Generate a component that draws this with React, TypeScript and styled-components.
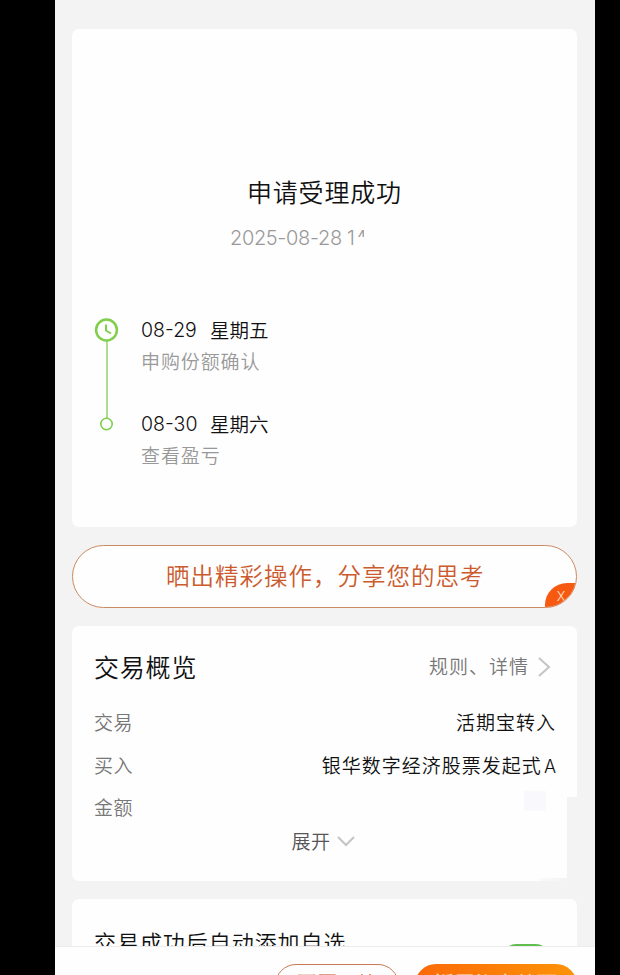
import React from "react";
import styled, { createGlobalStyle } from "styled-components";

const Global = createGlobalStyle`
  * { box-sizing: border-box; }
  html, body { margin: 0; padding: 0; background: #000; overflow: hidden; }
  body { font-family: "Noto Sans CJK SC", sans-serif; font-weight: 350; }
`;

const Screen = styled.main`
  width: 540px;
  height: 975px;
  margin-left: 55px;
  background: #f3f3f3;
  display: flex;
  flex-direction: column;
  overflow: hidden;
`;

const Content = styled.div`
  flex: 1;
  min-height: 0;
  overflow: hidden;
  padding: 29px 18px 0 17px;
`;

const Card = styled.section<{ $height: number }>`
  position: relative;
  height: ${(p) => p.$height}px;
  background: #fefefe;
  border-radius: 7px;
  margin-bottom: 18px;
  padding: 0 22px;
`;

const Text = styled.span<{ $size: number; $color?: string; $gap?: number; $weight?: number }>`
  display: block;
  white-space: nowrap;
  font-size: ${(p) => p.$size}px;
  color: ${(p) => p.$color ?? "#111"};
  letter-spacing: ${(p) => p.$gap ?? 0}px;
  font-weight: ${(p) => p.$weight ?? 350};
  line-height: 30px;
`;

const Digits = styled(Text)`
  font-family: Inter, "Noto Sans CJK SC", sans-serif;
  font-weight: 300;
`;

const Latin = styled.span`
  margin-left: 2px;
  letter-spacing: 0;
  font-family: Inter, sans-serif;
  font-size: 18px;
  font-weight: 300;
`;

const ResultHead = styled.header`
  padding: 147px 0 0 153px;
  height: 286px;
`;

const Stamp = styled.div`
  display: flex;
  margin: 17px 0 0 -17px;
`;

const CutDigit = styled.div`
  height: 14px;
  width: 9px;
  overflow: hidden;
`;

const Timeline = styled.div`
  display: grid;
  grid-template-columns: 47px 1fr;
`;

const Rail = styled.svg`
  display: block;
  width: 26px;
  height: 120px;
`;

const Steps = styled.div`
  display: grid;
  grid-auto-rows: 94px;
`;

const Step = styled.div`
  display: flex;
  flex-direction: column;
  gap: 1px;
`;

const StepDate = styled.div`
  display: grid;
  grid-template-columns: 69px auto;
`;

const Share = styled.div`
  height: 63px;
  margin-bottom: 18px;
  border: 1px solid #cb8a62;
  border-radius: 32px;
  background: #fefefe;
  overflow: hidden;
  position: relative;
  padding: 14px 0 0 93px;
`;

const Close = styled.button`
  position: absolute;
  right: -1px;
  bottom: -1px;
  width: 32px;
  height: 25px;
  border: 0;
  padding: 0;
  background: #f6590f;
  border-radius: 22px 0 0 0;
  color: #ffe5d3;
  font: 300 13px/24px Inter, sans-serif;
`;

const OverviewHead = styled.header`
  display: flex;
  justify-content: space-between;
  padding: 25px 4px 0 0;
  height: 81px;
`;

const Details = styled.div`
  display: flex;
  gap: 9px;
`;

const Chevron = styled.svg`
  fill: none;
  stroke: #c4c4c4;
  stroke-width: 2;
`;

const Row = styled.div`
  display: flex;
  justify-content: space-between;
  height: 42.5px;
  margin-right: -1px;
`;

const HiddenAmount = styled.span`
  width: 22px;
  height: 20px;
  margin: -1px 10px 0 0;
  background: #f9f9fd;
`;

const Expand = styled.div`
  display: flex;
  justify-content: center;
  gap: 6px;
  margin: -9px 0 0 -3px;
`;

const EdgeMask = styled.span`
  position: absolute;
  right: 0;
  bottom: 0;
  width: 10px;
  height: 84px;
  background: #f3f3f4;

  &::before {
    content: "";
    position: absolute;
    right: 10px;
    bottom: 0;
    width: 28px;
    height: 3px;
    background: linear-gradient(90deg, #fafafa, #f3f3f4);
  }
`;

const FavoriteRow = styled.div`
  display: flex;
  justify-content: space-between;
  padding-top: 27px;
`;

const Toggle = styled.span`
  width: 46px;
  height: 26px;
  margin: 18px 6px 0 0;
  border-radius: 13px;
  background: #62bd50;
`;

const Footer = styled.footer`
  height: 29px;
  background: #fefefe;
  border-top: 1px solid #ececec;
  display: flex;
  justify-content: flex-end;
  gap: 16px;
  padding: 17px 18px 0 0;
  overflow: hidden;
`;

const Action = styled.button<{ $primary?: boolean }>`
  flex: none;
  width: ${(p) => (p.$primary ? 162 : 124)}px;
  height: 42px;
  padding: ${(p) => (p.$primary ? 4 : 3)}px 0 0;
  display: flex;
  justify-content: center;
  border: ${(p) => (p.$primary ? "0" : "1px solid #cb7a55")};
  border-radius: 21px;
  background: ${(p) => (p.$primary ? "linear-gradient(90deg, #fb6909, #fd9308)" : "#fefefe")};
`;

export default function App() {
  return (
    <>
      <Global />
      <Screen>
        <Content>
          <Card $height={498}>
            <ResultHead>
              <Text $size={25} $gap={0.8}>申请受理成功</Text>
              <Stamp>
                <Digits $size={20} $gap={-0.35} $color="#999">2025-08-28 1</Digits>
                <CutDigit><Digits $size={20} $color="#999">4</Digits></CutDigit>
              </Stamp>
            </ResultHead>
            <Timeline>
              <Rail viewBox="0 0 26 120" fill="none" stroke="#7fce4c">
                <path d="M13 26V103" stroke="#9bd474" strokeWidth="1.6" />
                <circle cx="12.5" cy="15" r="10.4" strokeWidth="2.5" />
                <path d="M12 9.5V15.5L17 18.5" strokeWidth="2" />
                <circle cx="12.5" cy="109" r="5.7" strokeWidth="1.6" />
              </Rail>
              <Steps>
                <Step>
                  <StepDate><Digits $size={19.5}>08-29</Digits><Text $size={19.5}>星期五</Text></StepDate>
                  <Text $size={19} $gap={0.9} $color="#999">申购份额确认</Text>
                </Step>
                <Step>
                  <StepDate><Digits $size={19.5}>08-30</Digits><Text $size={19.5}>星期六</Text></StepDate>
                  <Text $size={19} $gap={0.9} $color="#999">查看盈亏</Text>
                </Step>
              </Steps>
            </Timeline>
          </Card>
          <Share>
            <Text $size={23.5} $gap={1} $color="#cb5a2c">晒出精彩操作，分享您的思考</Text>
            <Close>X</Close>
          </Share>
          <Card $height={255}>
            <OverviewHead>
              <Text $size={25} $gap={0.8}>交易概览</Text>
              <Details>
                <Text $size={19} $gap={1} $color="#777">规则、详情</Text>
                <Chevron width="13" height="30"><path d="M1 7l10 9-10 9" /></Chevron>
              </Details>
            </OverviewHead>
            <Row>
              <Text $size={19} $gap={0.5} $color="#777">交易</Text>
              <Text $size={19} $gap={1}>活期宝转入</Text>
            </Row>
            <Row>
              <Text $size={19} $gap={0.5} $color="#777">买入</Text>
              <Text $size={19} $gap={1}>银华数字经济股票发起式<Latin>A</Latin></Text>
            </Row>
            <Row>
              <Text $size={19} $gap={0.5} $color="#777">金额</Text>
              <HiddenAmount />
            </Row>
            <Expand>
              <Text $size={19} $gap={0.5} $color="#555">展开</Text>
              <Chevron width="18" height="30"><path d="M1 11l8 8 8-8" /></Chevron>
            </Expand>
            <EdgeMask />
          </Card>
          <Card $height={120}>
            <FavoriteRow>
              <Text $size={22} $gap={0.95}>交易成功后自动添加自选</Text>
              <Toggle />
            </FavoriteRow>
          </Card>
        </Content>
        <Footer>
          <Action><Text $size={20} $color="#cb5a2c">再买一笔</Text></Action>
          <Action $primary><Text $size={20} $gap={0.3} $color="#ffe5c8">返回资产首页</Text></Action>
        </Footer>
      </Screen>
    </>
  );
}
